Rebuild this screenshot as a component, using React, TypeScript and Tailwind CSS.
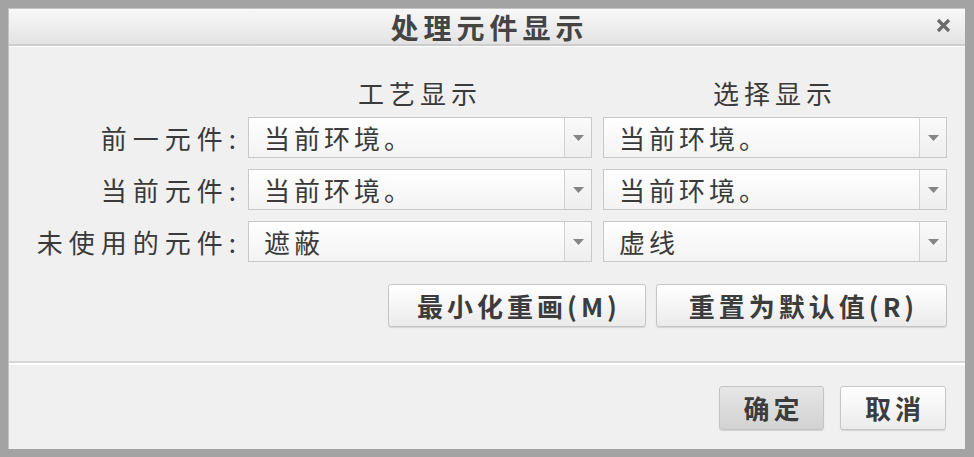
import React from "react";

const font = { fontFamily: '"Noto Sans CJK SC", "Noto Sans", sans-serif' };

const rows = [
  { label: "前一元件:", a: "当前环境。", b: "当前环境。" },
  { label: "当前元件:", a: "当前环境。", b: "当前环境。" },
  { label: "未使用的元件:", a: "遮蔽", b: "虚线" },
];

function Select({ value }: { value: string }) {
  return (
    <div className="h-[41px] flex border border-[#c9c9c9] bg-gradient-to-b from-[#ffffff] to-[#f3f3f3] shadow-[inset_0_1px_0_#ffffff]">
      <div className="flex-1 flex items-center pl-[15px] text-[26px] tracking-[4px] text-[#3a3a3a] leading-none">
        {value}
      </div>
      <div className="w-[27px] border-l border-[#d2d2d2] flex items-center justify-center bg-gradient-to-b from-[#fafafa] to-[#eeeeee]">
        <svg width="11" height="6" viewBox="0 0 11 6">
          <path d="M0 0 L11 0 L5.5 6 Z" fill="#858585" />
        </svg>
      </div>
    </div>
  );
}

function Button({
  children,
  primary,
  className,
}: {
  children: React.ReactNode;
  primary?: boolean;
  className?: string;
}) {
  return (
    <div
      className={
        "flex items-center justify-center rounded-[3px] border font-bold text-[26px] leading-none tracking-[4px] text-[#3c3c3c] shadow-[0_1px_1px_rgba(0,0,0,0.12)] " +
        (primary
          ? "border-[#c3c3c3] bg-gradient-to-b from-[#e6e6e6] to-[#d2d2d2] "
          : "border-[#c6c6c6] bg-gradient-to-b from-[#ffffff] to-[#ebebeb] ") +
        (className ?? "")
      }
    >
      <span className="mr-[-4px]">{children}</span>
    </div>
  );
}

export default function App() {
  return (
    <div
      style={font}
      className="w-[974px] h-[457px] bg-[#a3a3a3] pl-[8px] pt-[8px] pr-[9px] pb-[8px]"
    >
      <div className="h-full flex flex-col bg-[#f0f0f0] border-l border-t border-[#c4c4c4]">
        {/* Title bar */}
        <div className="h-[37px] relative flex items-center justify-center bg-gradient-to-b from-[#f8f8f8] to-[#e3e3e3] border-b-2 border-[#cdcdcd]">
          <span className="font-bold text-[28px] tracking-[5px] mr-[-5px] text-[#444] leading-none">
            处理元件显示
          </span>
          <svg
            className="absolute right-[14px] top-[9px]"
            width="15"
            height="15"
            viewBox="0 0 15 15"
          >
            <path d="M2 2 L13 13 M13 2 L2 13" stroke="#6b6b6b" strokeWidth="3.2" />
          </svg>
        </div>
        <div className="h-px bg-white" />

        {/* Body */}
        <div className="flex flex-col pt-[30px] h-[314px]">
          <div className="grid grid-cols-[228px_344px_344px] gap-x-[11px] gap-y-[11px] items-center">
            <div />
            <div className="text-center text-[26px] tracking-[5px] text-[#3a3a3a] leading-[32px] mb-[-3px]">
              工艺显示
            </div>
            <div className="text-center text-[26px] tracking-[5px] text-[#3a3a3a] leading-[32px] mb-[-3px]">
              选择显示
            </div>
            {rows.map((r) => (
              <React.Fragment key={r.label}>
                <div className="text-right text-[26px] tracking-[6px] text-[#3a3a3a] leading-none mr-[-5px] whitespace-nowrap">
                  {r.label}
                </div>
                <Select value={r.a} />
                <Select value={r.b} />
              </React.Fragment>
            ))}
          </div>
          <div className="flex justify-end gap-[10px] mt-[22px] w-[938px]">
            <Button className="w-[258px] h-[43px]">最小化重画(M)</Button>
            <Button className="w-[291px] h-[43px]">重置为默认值(R)</Button>
          </div>
        </div>

        {/* Footer */}
        <div className="h-[2px] bg-[#d6d6d6]" />
        <div className="h-[2px] bg-white" />
        <div className="flex-1 flex justify-end items-start pt-[21px] pr-[19px] gap-[16px]">
          <Button primary className="w-[105px] h-[44px]">
            确定
          </Button>
          <Button className="w-[106px] h-[44px]">取消</Button>
        </div>
      </div>
    </div>
  );
}
